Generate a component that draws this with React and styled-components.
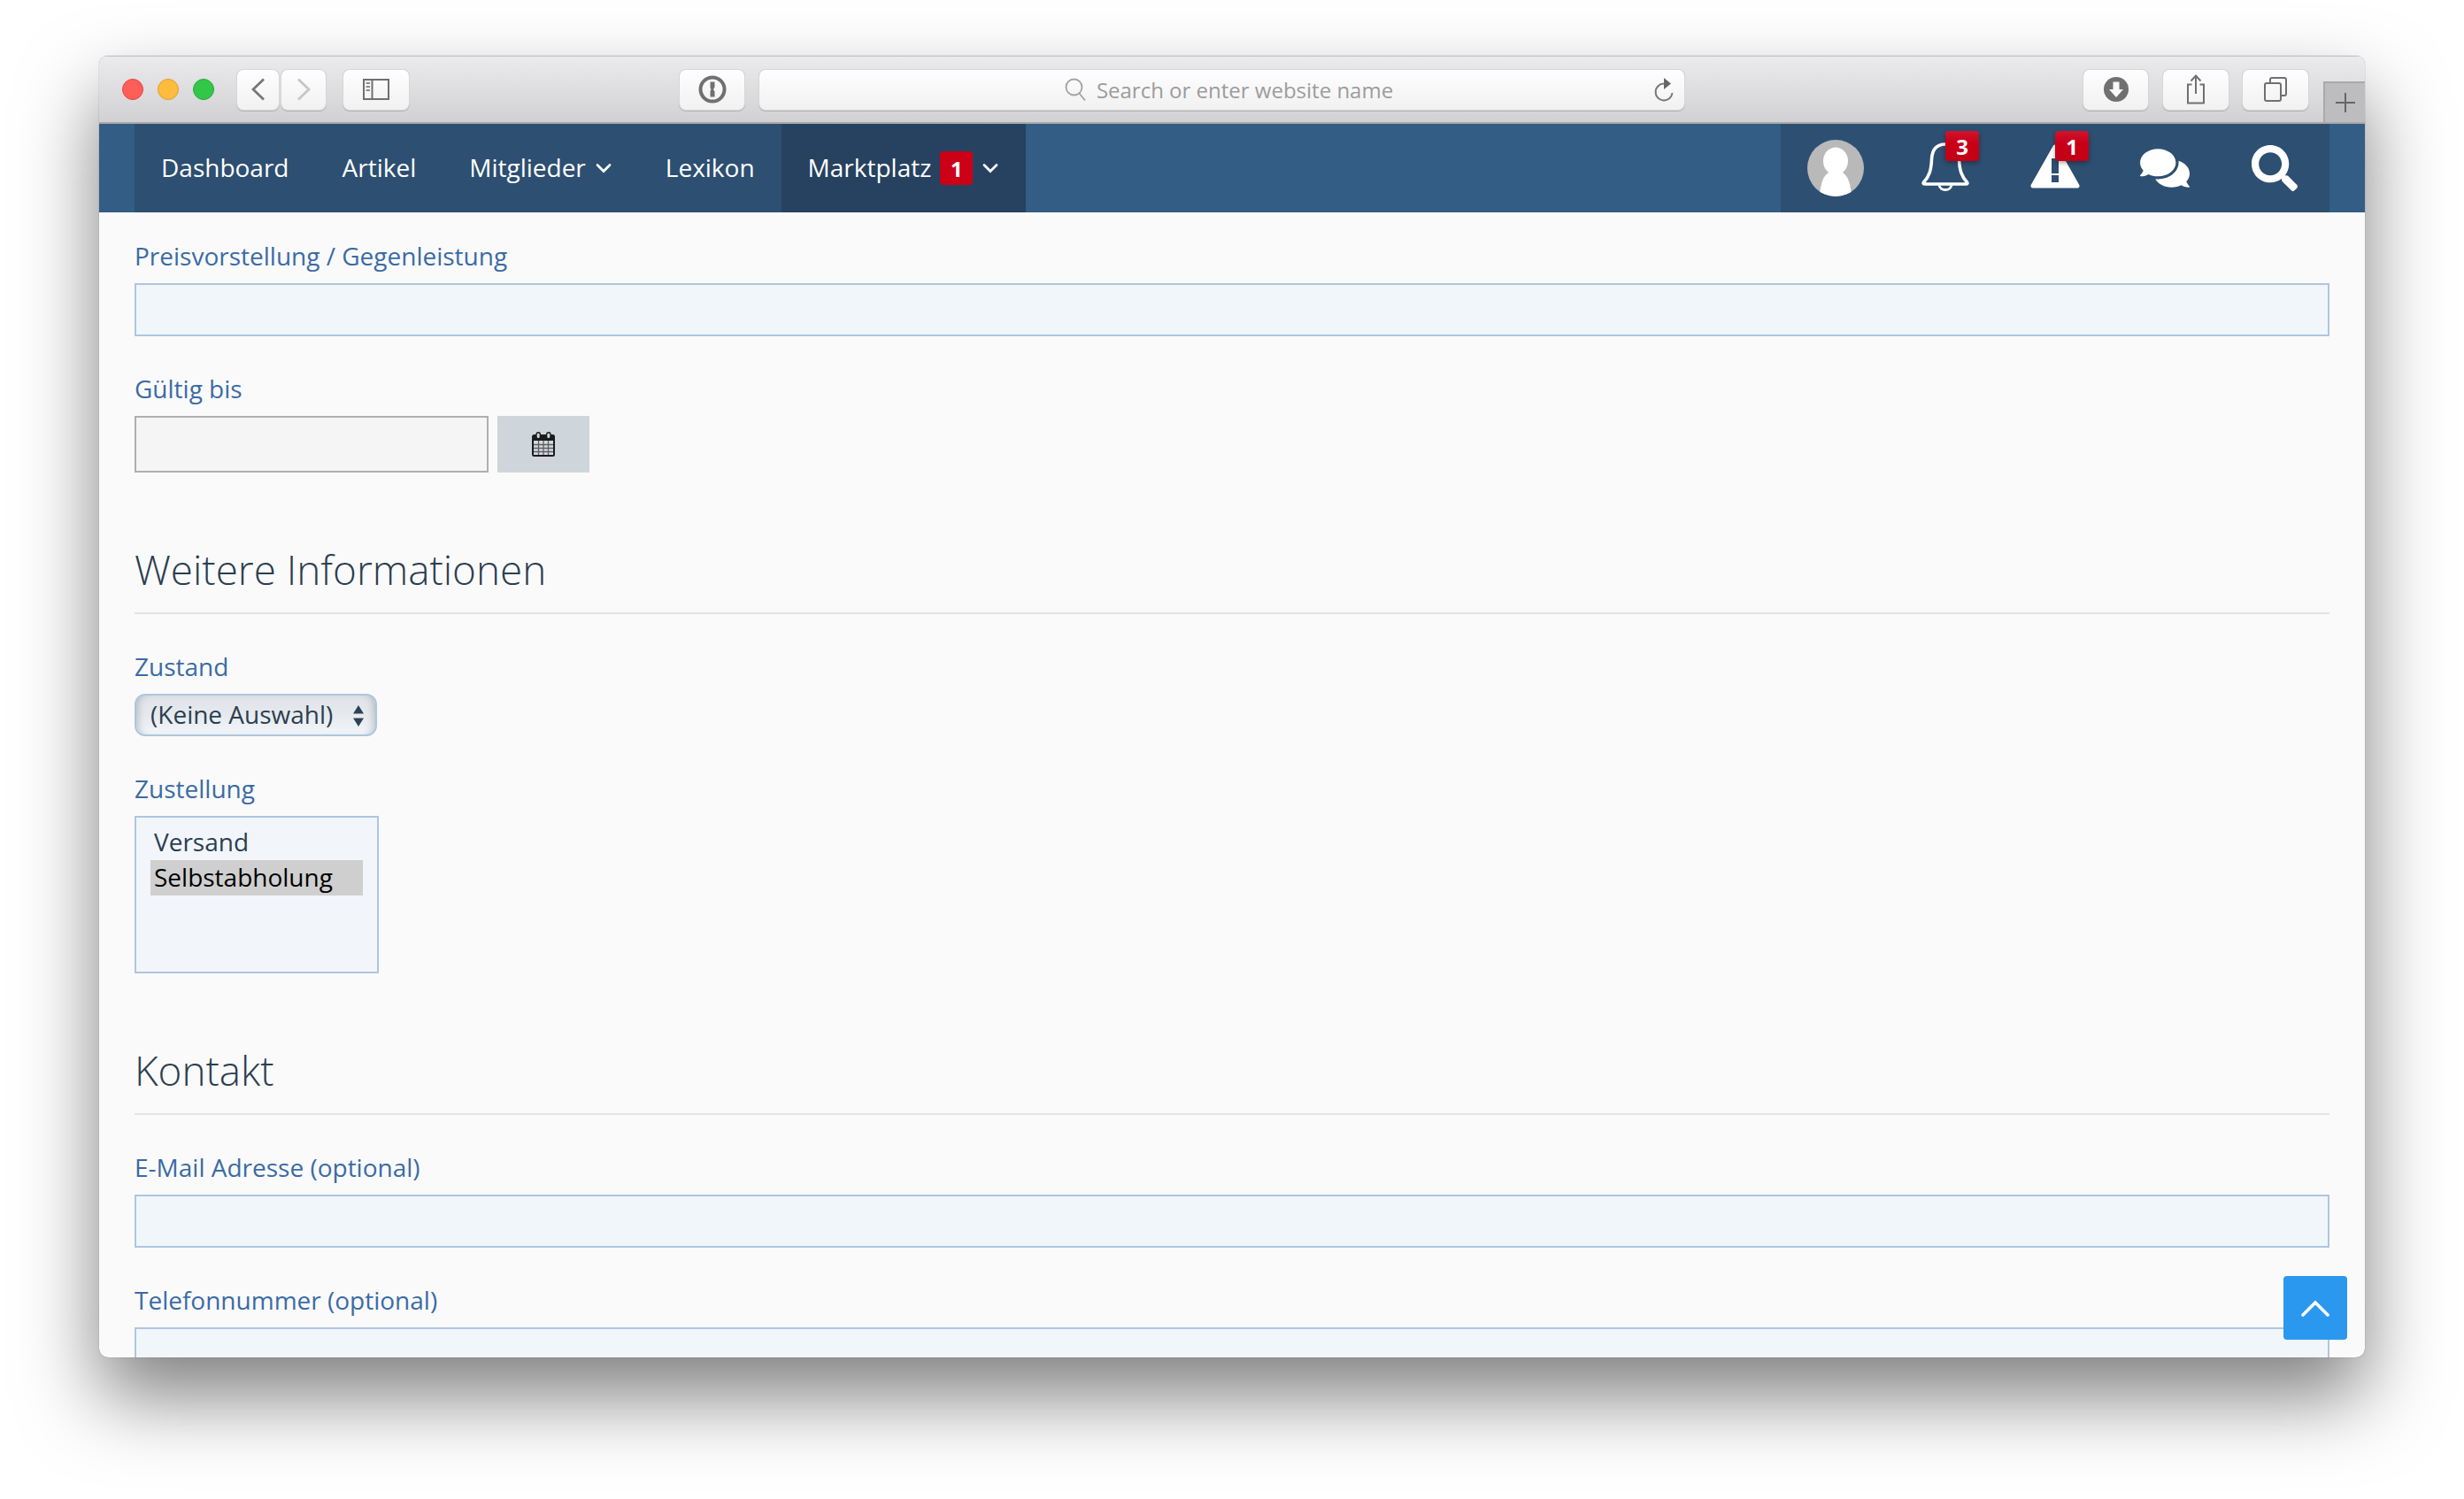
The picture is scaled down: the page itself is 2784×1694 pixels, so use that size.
import React from "react";
import styled, { createGlobalStyle } from "styled-components";
import { FaComments, FaSearch } from "react-icons/fa";

const Global = createGlobalStyle`
  html, body { margin: 0; padding: 0; background: #fff; }
  body { font-family: "Open Sans", "Noto Sans", sans-serif; }
  * { box-sizing: border-box; }
`;

const Page = styled.div`
  width: 2784px;
  height: 1694px;
  padding: 63px 112px 0;
  overflow: hidden;
`;

const BrowserWindow = styled.div`
  position: relative;
  height: 1471px;
  border-radius: 10px;
  overflow: hidden;
  background: #fafafa;
  display: flex;
  flex-direction: column;
  box-shadow: 0 0 1px rgba(0, 0, 0, 0.6), 0 44px 88px rgba(0, 0, 0, 0.5);
`;

const Toolbar = styled.div`
  flex: none;
  height: 77px;
  display: flex;
  align-items: center;
  padding-left: 26px;
  background: linear-gradient(#ebeaec, #d1d0d2);
  border-top: 1px solid #c4c4c4;
  border-bottom: 2px solid #a8a8a8;
`;

const Light = styled.span`
  width: 24px;
  height: 24px;
  border-radius: 50%;
  margin-right: 16px;
  background: ${(p) => p.$fill};
  border: 1px solid ${(p) => p.$edge};
`;

const ToolButton = styled.div`
  flex: none;
  width: ${(p) => p.$w}px;
  height: 45px;
  margin-left: ${(p) => p.$ml}px;
  display: flex;
  align-items: center;
  justify-content: center;
  border-radius: 7px;
  background: linear-gradient(#fefefe, #f1f1f1);
  box-shadow: 0 0 0 1px #d6d6d6, 0 1px 0 1px #b4b4b4;
`;

const UrlBar = styled.div`
  position: relative;
  flex: none;
  width: 1045px;
  height: 45px;
  margin-left: 17px;
  display: flex;
  align-items: center;
  justify-content: center;
  gap: 11px;
  padding-left: 16px;
  border-radius: 7px;
  background: linear-gradient(#fefefe, #f1f1f1);
  box-shadow: 0 0 0 1px #d6d6d6, 0 1px 0 1px #b4b4b4;
`;

const UrlText = styled.span`
  font-family: "Open Sans", sans-serif;
  font-size: 24px;
  color: #9c9c9c;
`;

const Reload = styled.span`
  position: absolute;
  right: 12px;
  top: 9px;
  display: flex;
`;

const ToolSpacer = styled.div`
  flex: 1;
`;

const NewTab = styled.div`
  flex: none;
  align-self: flex-end;
  width: 47px;
  height: 46px;
  margin-left: 17px;
  display: flex;
  align-items: center;
  justify-content: center;
  background: #bdbdbf;
  border-top: 2px solid #a9a9a9;
  border-left: 2px solid #a9a9a9;
`;

const Nav = styled.nav`
  flex: none;
  height: 100px;
  padding: 0 40px;
  display: flex;
  justify-content: space-between;
  background: #335d84;
`;

const NavGroup = styled.div`
  display: flex;
  background: #2d4f71;
`;

const NavItem = styled.div`
  height: 100%;
  padding: 0 30px;
  display: flex;
  align-items: center;
  gap: 10px;
  font-size: 28px;
  color: #fff;
  background: ${(p) => (p.$active ? "#264260" : "transparent")};
`;

const NavLabel = styled.span`
  margin-top: -2px;
`;

const CountBadge = styled.span`
  width: 37px;
  height: 38px;
  display: flex;
  align-items: center;
  justify-content: center;
  border-radius: 4px;
  font-size: 24px;
  font-weight: 700;
  color: #fff;
  background: #cc0017;
`;

const IconItem = styled.div`
  position: relative;
  width: 124px;
  height: 100%;
  display: flex;
  align-items: center;
  justify-content: center;
  color: #fff;
`;

const FloatBadge = styled.span`
  position: absolute;
  left: 62px;
  top: 8px;
  width: 38px;
  height: 34px;
  display: flex;
  align-items: center;
  justify-content: center;
  border-radius: 4px;
  font-size: 24px;
  font-weight: 700;
  color: #fff;
  background: linear-gradient(#d2142c, #c80018 40%, #c20016);
  box-shadow: 0 2px 5px rgba(0, 0, 0, 0.35);
`;

const Content = styled.main`
  flex: 1;
  min-height: 0;
  overflow: hidden;
  padding: 28px 40px 0;
`;

const Field = styled.div`
  margin-bottom: 38px;
`;

const Label = styled.label`
  display: block;
  height: 42px;
  margin-bottom: 10px;
  font-size: 28px;
  line-height: 42px;
  color: #3a6ba6;
`;

const TextInput = styled.input`
  display: block;
  width: 100%;
  height: 60px;
  border: 2px solid #aec6de;
  border-radius: 0;
  background: #f1f6fb;
  outline: none;
`;

const DateRow = styled.div`
  display: flex;
  gap: 10px;
`;

const DateInput = styled.input`
  width: 400px;
  height: 64px;
  border: 2px solid #aeaeb3;
  border-radius: 0;
  background: #f5f5f5;
  outline: none;
`;

const CalendarButton = styled.div`
  width: 104px;
  height: 64px;
  display: flex;
  align-items: center;
  justify-content: center;
  background: #ced6dc;
`;

const Heading = styled.h2`
  margin: 80px 0 0;
  height: 80px;
  border-bottom: 2px solid #e2e3e4;
  font-size: 45.8px;
  font-weight: 300;
  line-height: 58px;
  color: #2c3e50;
`;

const SectionBody = styled.div`
  margin-top: 38px;
`;

const SelectBox = styled.div`
  position: relative;
  width: 274px;
  height: 48px;
  padding: 0 0 2px 16px;
  display: flex;
  align-items: center;
  border: 2px solid #aec6de;
  border-radius: 12px;
  font-size: 28px;
  color: #2c3e50;
  background: linear-gradient(#dfe3e7, #e6eaee 50%, #f2f6fa);
  box-shadow: inset 8px 0 8px -6px rgba(90, 100, 110, 0.35), inset -8px 0 8px -6px rgba(90, 100, 110, 0.35);
`;

const SelectArrows = styled.svg`
  position: absolute;
  right: 12px;
  top: 10px;
`;

const ListBox = styled.div`
  width: 276px;
  height: 178px;
  padding: 8px 16px;
  border: 2px solid #aec6de;
  background: #f2f6fb;
`;

const ListOption = styled.div`
  height: 40px;
  padding-left: 4px;
  font-size: 28px;
  line-height: 38px;
  color: ${(p) => (p.$selected ? "#000" : "#2c3e50")};
  background: ${(p) => (p.$selected ? "#cfcfcf" : "transparent")};
`;

const ScrollTop = styled.div`
  position: absolute;
  left: 2468px;
  top: 1379px;
  width: 72px;
  height: 72px;
  display: flex;
  align-items: center;
  justify-content: center;
  border-radius: 4px;
  background: #2b98f0;
`;

const RaisedIcon = styled.svg`
  margin-top: ${(p) => p.$mt}px;
`;

const stroke = { fill: "none", stroke: "#6f6f6f", strokeWidth: 2.4 };

const Chevron = () => (
  <svg width="20" height="12" viewBox="0 0 20 12">
    <path d="M3 2.500l7 7 7-7" fill="none" stroke="#fff" strokeWidth="2.800" strokeLinecap="round" />
  </svg>
);

const Avatar = () => (
  <svg width="64" height="64" viewBox="0 0 64 64">
    <defs>
      <clipPath id="avatar-clip"><circle cx="32" cy="32" r="32" /></clipPath>
    </defs>
    <circle cx="32" cy="32" r="32" fill="#b9b9b9" />
    <g clipPath="url(#avatar-clip)" fill="#fff">
      <ellipse cx="32" cy="24" rx="14" ry="15.5" />
      <path d="M26 34h12l2 3c6 4 9 12 10 27H14c1-15 4-23 10-27z" />
    </g>
  </svg>
);

const Bell = () => (
  <RaisedIcon $mt={-2} width="54" height="56" viewBox="0 0 54 56">
    <path
      d="M27 2C15 2 12 10 11.500 19 11 31 9 38 2.500 45c-.8 1-.5 2 .8 2h47.400c1.300 0 1.600-1 .8-2C45 38 43 31 42.500 19 42 10 39 2 27 2z"
      fill="none"
      stroke="#fff"
      strokeWidth="3.600"
      strokeLinejoin="round"
    />
    <path d="M20 48.500a7.200 6.500 0 0 0 14 0" fill="none" stroke="#fff" strokeWidth="2.800" />
  </RaisedIcon>
);

const Warning = () => (
  <RaisedIcon $mt={-4} width="56" height="50" viewBox="0 0 56 50">
    <path d="M28 3 53 47H3z" fill="#fff" stroke="#fff" strokeWidth="5" strokeLinejoin="round" />
    <rect x="24" y="16" width="8" height="17" fill="#2d4f71" />
    <rect x="24" y="35" width="8" height="8" fill="#2d4f71" />
  </RaisedIcon>
);

const Calendar = () => (
  <svg width="26" height="28" viewBox="0 0 26 28">
    <rect x="0" y="3" width="26" height="25" rx="2.500" fill="#1c1c1c" />
    <rect x="2" y="10" width="22" height="16" fill="#d4dadf" />
    <path d="M2 14.500h22M2 18.500h22M2 22.500h22M7.500 10v16M13 10v16M18.500 10v16" stroke="#5c5f63" strokeWidth="1.300" />
    <rect x="5" y="0.700" width="4.400" height="7" rx="2.200" fill="#ced6dc" stroke="#1c1c1c" strokeWidth="1.400" />
    <rect x="16.600" y="0.700" width="4.400" height="7" rx="2.200" fill="#ced6dc" stroke="#1c1c1c" strokeWidth="1.400" />
  </svg>
);

export default function App() {
  return (
    <>
      <Global />
      <Page>
        <BrowserWindow>
          <Toolbar>
            <Light $fill="#fd5f58" $edge="#e2463f" />
            <Light $fill="#fdbc3d" $edge="#e09e2c" />
            <Light $fill="#33c748" $edge="#27aa35" />
            <ToolButton $w={47} $ml={10}>
              <svg width="16" height="26" viewBox="0 0 16 26"><path d="M14 1.500 2 13l12 11.500" fill="none" stroke="#777" strokeWidth="2.800" /></svg>
            </ToolButton>
            <ToolButton $w={50} $ml={3}>
              <svg width="16" height="26" viewBox="0 0 16 26"><path d="M2 1.500 14 13 2 24.500" fill="none" stroke="#c6c6c6" strokeWidth="2.800" /></svg>
            </ToolButton>
            <ToolButton $w={74} $ml={20}>
              <svg width="30" height="24" viewBox="0 0 30 24">
                <rect x="1" y="1" width="28" height="22" fill="none" stroke="#6f6f6f" strokeWidth="2" />
                <path d="M10.500 1v22" stroke="#6f6f6f" strokeWidth="2" />
                <path d="M3.500 5h4.500M3.500 9h4.500M3.500 13h4.500" stroke="#8c8c8c" strokeWidth="2" />
              </svg>
            </ToolButton>
            <ToolButton $w={73} $ml={306}>
              <svg width="32" height="32" viewBox="0 0 32 32">
                <circle cx="16" cy="16" r="13.500" fill="none" stroke="#707070" strokeWidth="4" />
                <path d="M13.500 7.500h5v6l-1.500 2.500 1.500 2.500v6h-5v-7l1-1.500-1-1.500z" fill="#707070" />
              </svg>
            </ToolButton>
            <UrlBar>
              <svg width="25" height="26" viewBox="0 0 25 26">
                <circle cx="10.500" cy="10.500" r="9" {...stroke} stroke="#a2a2a2" strokeWidth="1.800" />
                <path d="m16.500 17.500 6.500 8" {...stroke} stroke="#a2a2a2" strokeWidth="1.800" />
              </svg>
              <UrlText>Search or enter website name</UrlText>
              <Reload>
                <svg width="22" height="28" viewBox="0 0 22 28">
                  <path d="M11 6.500a9.500 9.500 0 1 0 9.500 10.500" fill="none" stroke="#777" strokeWidth="2" />
                  <path d="M11 0l8 6.500-8 6.500z" fill="#666" />
                </svg>
              </Reload>
            </UrlBar>
            <ToolSpacer />
            <ToolButton $w={73} $ml={0}>
              <svg width="28" height="28" viewBox="0 0 28 28">
                <circle cx="14" cy="14" r="14" fill="#707070" />
                <path d="M10.500 5.500h7V14h4.500L14 23 6 14h4.500z" fill="#f8f8f8" />
              </svg>
            </ToolButton>
            <ToolButton $w={74} $ml={17}>
              <svg width="24" height="34" viewBox="0 0 24 34">
                <path d="M7.500 11.500H3v21h18v-21h-4.500" fill="none" stroke="#707070" strokeWidth="2" />
                <path d="M12 2v20M6.500 7.500 12 1.500l5.500 6" fill="none" stroke="#707070" strokeWidth="2" />
              </svg>
            </ToolButton>
            <ToolButton $w={74} $ml={16}>
              <svg width="26" height="28" viewBox="0 0 26 28">
                <rect x="1" y="7" width="18" height="20" rx="2" fill="none" stroke="#707070" strokeWidth="2" />
                <path d="M7 7V3a2 2 0 0 1 2-2h14a2 2 0 0 1 2 2v16a2 2 0 0 1-2 2h-4" fill="none" stroke="#707070" strokeWidth="2" />
              </svg>
            </ToolButton>
            <NewTab>
              <svg width="24" height="24" viewBox="0 0 24 24"><path d="M12 1v22M1 12h22" stroke="#666" strokeWidth="2" /></svg>
            </NewTab>
          </Toolbar>
          <Nav>
            <NavGroup>
              <NavItem><NavLabel>Dashboard</NavLabel></NavItem>
              <NavItem><NavLabel>Artikel</NavLabel></NavItem>
              <NavItem><NavLabel>Mitglieder</NavLabel><Chevron /></NavItem>
              <NavItem><NavLabel>Lexikon</NavLabel></NavItem>
              <NavItem $active><NavLabel>Marktplatz</NavLabel><CountBadge>1</CountBadge><Chevron /></NavItem>
            </NavGroup>
            <NavGroup>
              <IconItem><Avatar /></IconItem>
              <IconItem><Bell /><FloatBadge>3</FloatBadge></IconItem>
              <IconItem><Warning /><FloatBadge>1</FloatBadge></IconItem>
              <IconItem><FaComments size={56} /></IconItem>
              <IconItem><FaSearch size={52} /></IconItem>
            </NavGroup>
          </Nav>
          <Content>
            <Field>
              <Label>Preisvorstellung / Gegenleistung</Label>
              <TextInput />
            </Field>
            <Field>
              <Label>Gültig bis</Label>
              <DateRow>
                <DateInput />
                <CalendarButton><Calendar /></CalendarButton>
              </DateRow>
            </Field>
            <Heading>Weitere Informationen</Heading>
            <SectionBody>
              <Field>
                <Label>Zustand</Label>
                <SelectBox>
                  (Keine Auswahl)
                  <SelectArrows width="14" height="26" viewBox="0 0 14 26">
                    <path d="M7 1l6 9.500H1zM7 25l-6-9.500h12z" fill="#2f4255" />
                  </SelectArrows>
                </SelectBox>
              </Field>
              <Field>
                <Label>Zustellung</Label>
                <ListBox>
                  <ListOption>Versand</ListOption>
                  <ListOption $selected>Selbstabholung</ListOption>
                </ListBox>
              </Field>
            </SectionBody>
            <Heading>Kontakt</Heading>
            <SectionBody>
              <Field>
                <Label>E-Mail Adresse (optional)</Label>
                <TextInput />
              </Field>
              <Field>
                <Label>Telefonnummer (optional)</Label>
                <TextInput />
              </Field>
            </SectionBody>
          </Content>
          <ScrollTop>
            <svg width="32" height="20" viewBox="0 0 32 20"><path d="M2 18 16 4l14 14" fill="none" stroke="#fff" strokeWidth="3.600" strokeLinecap="round" /></svg>
          </ScrollTop>
        </BrowserWindow>
      </Page>
    </>
  );
}
